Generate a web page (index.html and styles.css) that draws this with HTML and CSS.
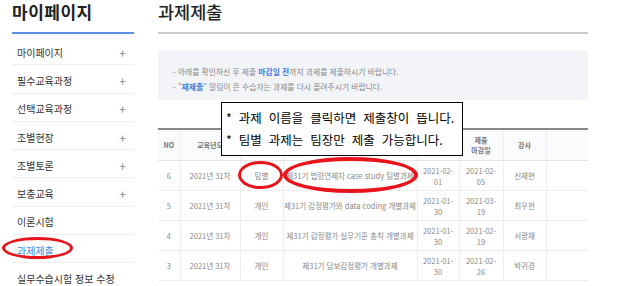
FILE: index.html
```html
<!DOCTYPE html>
<html lang="ko">
<head>
    <meta charset="UTF-8">
    <title>과제제출</title>
    <link rel="stylesheet" href="styles.css">
</head>
<body>
    <div class="page">
        <div class="sidebar">
            <h2 class="side-title">마이페이지</h2>
            <ul class="menu">
                <li>마이페이지<span class="plus">+</span></li>
                <li>필수교육과정<span class="plus">+</span></li>
                <li>선택교육과정<span class="plus">+</span></li>
                <li>조별현장<span class="plus">+</span></li>
                <li>조별토론<span class="plus">+</span></li>
                <li>보충교육<span class="plus">+</span></li>
                <li>이론시험</li>
                <li class="active">과제제출</li>
                <li>실무수습시험 정보 수정</li>
            </ul>
        </div>
        <div class="main">
            <h1 class="title">과제제출</h1>
            <div class="notice">
                <p>- 아래를 확인하신 후 제출 <b class="blue">마감일 전</b>까지 과제를 제출하시기 바랍니다.</p>
                <p>- "<b class="blue">재제출</b>" 알림이 뜬 수습자는 과제를 다시 올려주시기 바랍니다.</p>
            </div>
            <table class="list">
                <colgroup>
                    <col style="width:22px"><col style="width:60px"><col style="width:43px"><col style="width:134px">
                    <col style="width:42px"><col style="width:44px"><col style="width:43px"><col style="width:42px">
                </colgroup>
                <thead>
                    <tr><th>NO</th><th>교육년도</th><th></th><th></th><th></th><th>제출<br>마감일</th><th>강사</th><th></th></tr>
                </thead>
                <tbody>
                    <tr><td>6</td><td>2021년 31차</td><td>팀별</td><td>제31기 법령연제자 case study 팀별과제</td><td>2021-02-<br>01</td><td>2021-02-<br>05</td><td>신재현</td><td></td></tr>
                    <tr><td>5</td><td>2021년 31차</td><td>개인</td><td>제31기 감정평가와 data coding 개별과제</td><td>2021-01-<br>30</td><td>2021-03-<br>19</td><td>최우현</td><td></td></tr>
                    <tr><td>4</td><td>2021년 31차</td><td>개인</td><td>제31기 감정평가 실무기준 총칙 개별과제</td><td>2021-01-<br>30</td><td>2021-02-<br>19</td><td>서광채</td><td></td></tr>
                    <tr><td>3</td><td>2021년 31차</td><td>개인</td><td>제31기 담보감정평가 개별과제</td><td>2021-01-<br>30</td><td>2021-02-<br>26</td><td>박귀경</td><td></td></tr>
                </tbody>
            </table>
        </div>
    </div>

    <div class="callout">
        <p>* 과제 이름을 클릭하면 제출창이 뜹니다.</p>
        <p>* 팀별 과제는 팀장만 제출 가능합니다.</p>
    </div>
    <div class="circle c-menu"></div>
    <div class="circle c-type"></div>
    <div class="circle c-name"></div>
</body>
</html>
```

FILE: styles.css
```css
body {
    margin: 0;
    font-family: "Noto Sans CJK KR", "Noto Sans", sans-serif;
    background: #fff;
    color: #333;
    overflow: hidden;
}
.page {
    display: flex;
    padding-left: 12px;
    gap: 24px;
}
.sidebar {
    width: 122px;
}
.side-title {
    margin: 0;
    height: 32px;
    font-size: 17px;
    font-weight: bold;
    line-height: 24px;
    color: #222;
    border-bottom: 2px solid #5b8ee6;
    letter-spacing: 0.5px;
}
.menu {
    list-style: none;
    margin: 0;
    padding: 3px 0 0;
}
.menu li {
    display: flex;
    justify-content: space-between;
    align-items: center;
    box-sizing: border-box;
    height: 28.3px;
    padding: 3px 8px 0 5px;
    font-size: 10px;
    color: #333;
    border-bottom: 1px solid #eee;
}
.menu li.active {
    color: #4a86e8;
}
.plus {
    color: #888;
    font-size: 12px;
}
.main {
    width: 430px;
}
.title {
    margin: 0;
    height: 32px;
    font-size: 17.5px;
    font-weight: 500;
    line-height: 24px;
    color: #222;
    border-bottom: 2px solid #ccc;
}
.notice {
    margin-top: 16px;
    height: 50px;
    padding: 14px 15px 0;
    box-sizing: border-box;
    background: #f3f4f8;
}
.notice p {
    margin: 0;
    font-size: 7.8px;
    line-height: 15px;
    color: #888;
}
.blue {
    color: #3d7be0;
    font-weight: bold;
}
.list {
    margin-top: 28px;
    width: 430px;
    border-collapse: collapse;
    table-layout: fixed;
    border-top: 2px solid #888;
}
.list th {
    height: 28px;
    font-size: 7px;
    font-weight: bold;
    color: #777;
    background: #fafbfc;
    border-bottom: 1px solid #e6e6e6;
    border-left: 1px solid #eee;
    line-height: 10px;
}
.list td {
    height: 29px;
    padding: 0;
    font-size: 7.5px;
    line-height: 11px;
    color: #888;
    text-align: center;
    border-bottom: 1px solid #eee;
    border-left: 1px solid #eee;
}
.list th:first-child, .list td:first-child {
    border-left: none;
}
.callout {
    position: absolute;
    left: 221px;
    top: 102px;
    width: 242px;
    height: 54px;
    box-sizing: border-box;
    padding: 4px 0 0 4px;
    background: #fff;
    border: 1px solid #000;
}
.callout p {
    margin: 0;
    font-size: 12.5px;
    line-height: 22px;
    color: #000;
    word-spacing: 3.5px;
    white-space: nowrap;
}
.circle {
    position: absolute;
    border: 3px solid #e8141b;
    border-radius: 50%;
    box-sizing: border-box;
}
.c-menu {
    left: 2px;
    top: 237px;
    width: 71px;
    height: 22px;
}
.c-type {
    left: 238px;
    top: 161px;
    width: 45px;
    height: 28px;
}
.c-name {
    left: 283px;
    top: 157px;
    width: 135px;
    height: 36px;
    border-width: 4px;
}
```
